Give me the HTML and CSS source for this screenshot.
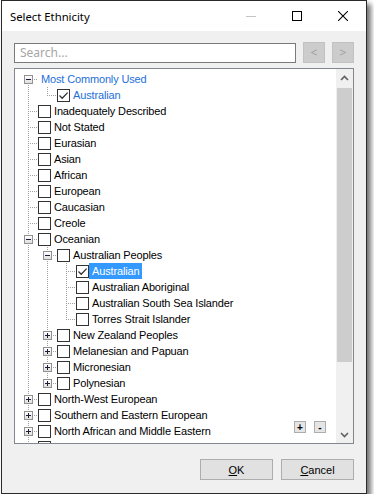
FILE: index.html
```html
<!DOCTYPE html>
<html>
<head>
<meta charset="utf-8">
<title>Select Ethnicity</title>
<link rel="stylesheet" href="styles.css">
</head>
<body>
<div class="win">
  <div class="titlebar">
    <span class="title">Select Ethnicity</span>
    <div class="caps">
      <span class="cap"><svg width="10" height="10" viewBox="0 0 10 10"><rect x="0" y="5" width="10" height="1" fill="#c4c4c4"/></svg></span>
      <span class="cap"><svg width="10" height="10" viewBox="0 0 10 10"><rect x="0.5" y="0.5" width="9" height="9" fill="none" stroke="#000" stroke-width="1"/></svg></span>
      <span class="cap"><svg width="10" height="10" viewBox="0 0 10 10"><path d="M0 0 L10 10 M10 0 L0 10" stroke="#000" stroke-width="1.05" fill="none"/></svg></span>
    </div>
  </div>
  <div class="body">
    <div class="searchrow">
      <div class="search">Search...</div>
      <span class="nav">&lt;</span>
      <span class="nav">&gt;</span>
    </div>
    <div class="tree">
      <div class="list">
        <div class="row"><span class="n first"><span class="exp minus"></span></span><span class="lbl blue">Most Commonly Used</span></div>
        <div class="row"><span class="g"></span><span class="n last"></span><span class="cb on"><svg width="11" height="11" viewBox="0 0 11 11"><path d="M1.5 5.5 L4.2 8.2 L9.6 2.6" stroke="#333" stroke-width="1.3" fill="none"/></svg></span><span class="lbl blue">Australian</span></div>
        <div class="row"><span class="n mid"></span><span class="cb"></span><span class="lbl">Inadequately Described</span></div>
        <div class="row"><span class="n mid"></span><span class="cb"></span><span class="lbl">Not Stated</span></div>
        <div class="row"><span class="n mid"></span><span class="cb"></span><span class="lbl">Eurasian</span></div>
        <div class="row"><span class="n mid"></span><span class="cb"></span><span class="lbl">Asian</span></div>
        <div class="row"><span class="n mid"></span><span class="cb"></span><span class="lbl">African</span></div>
        <div class="row"><span class="n mid"></span><span class="cb"></span><span class="lbl">European</span></div>
        <div class="row"><span class="n mid"></span><span class="cb"></span><span class="lbl">Caucasian</span></div>
        <div class="row"><span class="n mid"></span><span class="cb"></span><span class="lbl">Creole</span></div>
        <div class="row"><span class="n mid"><span class="exp minus"></span></span><span class="cb"></span><span class="lbl">Oceanian</span></div>
        <div class="row"><span class="g"></span><span class="n mid"><span class="exp minus"></span></span><span class="cb"></span><span class="lbl">Australian Peoples</span></div>
        <div class="row"><span class="g"></span><span class="g"></span><span class="n mid"></span><span class="cb on"><svg width="11" height="11" viewBox="0 0 11 11"><path d="M1.5 5.5 L4.2 8.2 L9.6 2.6" stroke="#333" stroke-width="1.3" fill="none"/></svg></span><span class="lbl sel">Australian</span></div>
        <div class="row"><span class="g"></span><span class="g"></span><span class="n mid"></span><span class="cb"></span><span class="lbl">Australian Aboriginal</span></div>
        <div class="row"><span class="g"></span><span class="g"></span><span class="n mid"></span><span class="cb"></span><span class="lbl">Australian South Sea Islander</span></div>
        <div class="row"><span class="g"></span><span class="g"></span><span class="n last"></span><span class="cb"></span><span class="lbl">Torres Strait Islander</span></div>
        <div class="row"><span class="g"></span><span class="n mid"><span class="exp plus"></span></span><span class="cb"></span><span class="lbl">New Zealand Peoples</span></div>
        <div class="row"><span class="g"></span><span class="n mid"><span class="exp plus"></span></span><span class="cb"></span><span class="lbl">Melanesian and Papuan</span></div>
        <div class="row"><span class="g"></span><span class="n mid"><span class="exp plus"></span></span><span class="cb"></span><span class="lbl">Micronesian</span></div>
        <div class="row"><span class="g"></span><span class="n last"><span class="exp plus"></span></span><span class="cb"></span><span class="lbl">Polynesian</span></div>
        <div class="row"><span class="n mid"><span class="exp plus"></span></span><span class="cb"></span><span class="lbl">North-West European</span></div>
        <div class="row"><span class="n mid"><span class="exp plus"></span></span><span class="cb"></span><span class="lbl">Southern and Eastern European</span></div>
        <div class="row"><span class="n mid"><span class="exp plus"></span></span><span class="cb"></span><span class="lbl">North African and Middle Eastern</span></div>
        <div class="row"><span class="n mid"><span class="exp plus"></span></span><span class="cb"></span></div>
      </div>
      <div class="vscroll">
        <span class="sbtn"><svg width="9" height="6" viewBox="0 0 9 6"><path d="M1 5 L4.5 1.5 L8 5" stroke="#606060" stroke-width="1.6" fill="none"/></svg></span>
        <div class="track"><div class="thumb"></div></div>
        <span class="sbtn"><svg width="9" height="6" viewBox="0 0 9 6"><path d="M1 1 L4.5 4.5 L8 1" stroke="#606060" stroke-width="1.6" fill="none"/></svg></span>
      </div>
      <div class="pm"><span class="pmb">+</span><span class="pmb">-</span></div>
    </div>
    <div class="actions">
      <span class="btn"><u>O</u>K</span>
      <span class="btn"><u>C</u>ancel</span>
    </div>
  </div>
</div>
</body>
</html>
```

FILE: styles.css
```css
html, body {
  margin: 0;
  padding: 0;
  background: #ffffff;
}

.win {
  box-sizing: border-box;
  width: 366px;
  height: 494px;
  margin-left: 1px;
  border: 1px solid #2a2a2a;
  background: #f0f0f0;
  box-shadow: 4px 4px 5px rgba(0, 0, 0, 0.55);
  display: flex;
  flex-direction: column;
  font-family: "Liberation Sans", Arial, sans-serif;
  font-size: 11px;
  color: #000;
}

.titlebar {
  height: 30px;
  background: #ffffff;
  display: flex;
  align-items: center;
  flex: none;
}

.title {
  padding-left: 8px;
  font-family: "Noto Sans", "Open Sans", sans-serif;
  font-size: 11.3px;
  flex: 1;
}

.caps {
  display: flex;
  height: 30px;
}

.cap {
  width: 46px;
  height: 30px;
  display: flex;
  align-items: center;
  justify-content: center;
}

.body {
  flex: 1;
  display: flex;
  flex-direction: column;
  padding: 11px 12px 13px 12px;
}

.searchrow {
  display: flex;
  align-items: center;
  gap: 7px;
  height: 21px;
  flex: none;
}

.search {
  box-sizing: border-box;
  flex: 1;
  height: 20px;
  border: 1px solid #7a7a7a;
  background: #fff;
  padding-left: 5px;
  font-family: "Noto Sans", "Open Sans", sans-serif;
  font-size: 12px;
  line-height: 18px;
  color: #a6a6a6;
}

.nav {
  box-sizing: border-box;
  width: 22px;
  height: 21px;
  background: #cccccc;
  border: 1px solid #c2c2c2;
  color: #a0a0a0;
  font-family: "Noto Sans", "Open Sans", sans-serif;
  font-size: 12px;
  display: flex;
  align-items: center;
  justify-content: center;
}

.tree {
  position: relative;
  box-sizing: border-box;
  margin-top: 5px;
  height: 376px;
  border: 1px solid #828790;
  background: #ffffff;
  display: flex;
  flex: none;
}

.list {
  flex: 1;
  overflow: hidden;
  padding-top: 2px;
}

.row {
  display: flex;
  align-items: center;
  height: 16px;
  padding-left: 4px;
  white-space: nowrap;
}

.g, .n {
  width: 19px;
  height: 16px;
  flex: none;
  display: flex;
  align-items: flex-start;
}

.g {
  background: repeating-linear-gradient(to bottom, #a0a0a0 0 1px, transparent 1px 2px) 9px 0 / 1px 16px no-repeat;
}

.n.mid {
  background:
    repeating-linear-gradient(to bottom, #a0a0a0 0 1px, transparent 1px 2px) 9px 0 / 1px 16px no-repeat,
    repeating-linear-gradient(to right, #a0a0a0 0 1px, transparent 1px 2px) 9px 8px / 10px 1px no-repeat;
}

.n.last {
  background:
    repeating-linear-gradient(to bottom, #a0a0a0 0 1px, transparent 1px 2px) 9px 0 / 1px 9px no-repeat,
    repeating-linear-gradient(to right, #a0a0a0 0 1px, transparent 1px 2px) 9px 8px / 10px 1px no-repeat;
}

.n.first {
  background:
    repeating-linear-gradient(to bottom, #a0a0a0 0 1px, transparent 1px 2px) 9px 8px / 1px 8px no-repeat,
    repeating-linear-gradient(to right, #a0a0a0 0 1px, transparent 1px 2px) 9px 8px / 10px 1px no-repeat;
}

.exp {
  box-sizing: border-box;
  width: 9px;
  height: 9px;
  margin: 4px 0 0 5px;
  border: 1px solid #919191;
}

.exp.minus {
  background:
    linear-gradient(#1b1b3a, #1b1b3a) center / 5px 1px no-repeat,
    linear-gradient(#ffffff, #dedede);
}

.exp.plus {
  background:
    linear-gradient(#1b1b3a, #1b1b3a) center / 5px 1px no-repeat,
    linear-gradient(#1b1b3a, #1b1b3a) center / 1px 5px no-repeat,
    linear-gradient(#ffffff, #dedede);
}

.cb {
  box-sizing: border-box;
  width: 13px;
  height: 13px;
  flex: none;
  border: 1px solid #333333;
  background: #ffffff;
  display: flex;
  align-items: center;
  justify-content: center;
}

.lbl {
  height: 16px;
  line-height: 16px;
  padding: 0 3px 0 3px;
  letter-spacing: -0.15px;
}

.lbl.blue {
  color: #1e70d8;
}

.lbl.sel {
  background: #3399ff;
  color: #ffffff;
}

.vscroll {
  width: 17px;
  flex: none;
  background: #f0f0f0;
  display: flex;
  flex-direction: column;
}

.sbtn {
  height: 17px;
  flex: none;
  display: flex;
  align-items: center;
  justify-content: center;
}

.track {
  flex: 1;
  padding-top: 2px;
}

.thumb {
  margin: 0 1px;
  height: 274px;
  background: #cdcdcd;
}

.pm {
  position: absolute;
  left: 279px;
  top: 352px;
  display: flex;
  gap: 8px;
}

.pmb {
  box-sizing: border-box;
  width: 12px;
  height: 12px;
  background: #e5e5e5;
  border: 1px solid #adadad;
  font-size: 10px;
  font-weight: bold;
  line-height: 9px;
  display: flex;
  align-items: center;
  justify-content: center;
}

.actions {
  margin-top: 15px;
  display: flex;
  justify-content: flex-end;
  gap: 8px;
}

.btn {
  box-sizing: border-box;
  width: 73px;
  height: 21px;
  background: #e1e1e1;
  border: 1px solid #adadad;
  display: flex;
  align-items: center;
  justify-content: center;
  font-size: 11px;
}
```
